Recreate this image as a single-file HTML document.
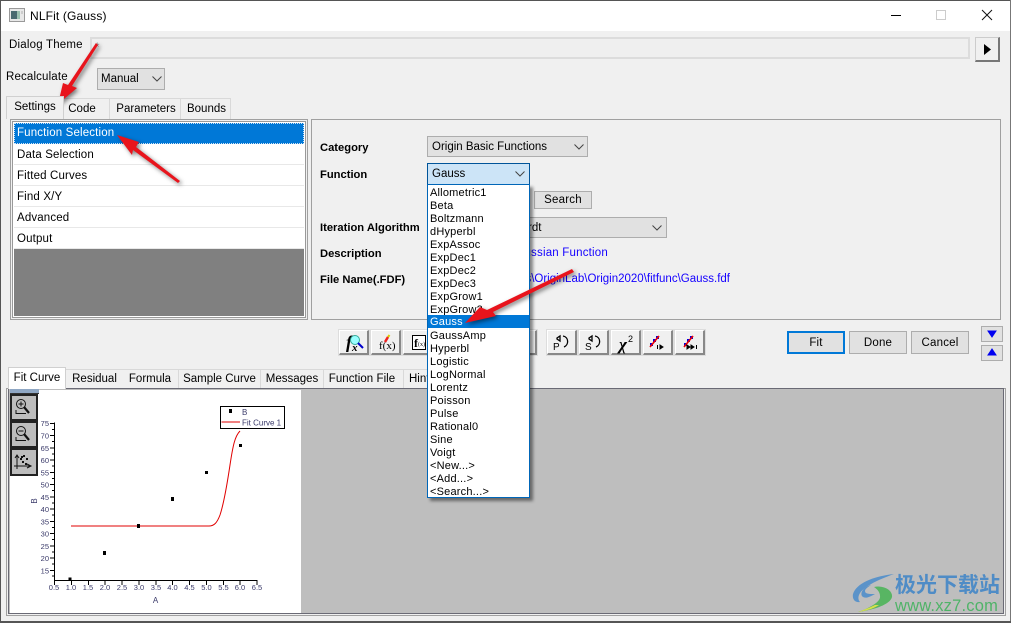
<!DOCTYPE html>
<html><head><meta charset="utf-8"><style>
html,body{margin:0;padding:0}
body{width:1011px;height:623px;overflow:hidden;position:relative;background:#f0f0f0;font:11.5px "Liberation Sans","Noto Sans CJK SC",sans-serif;color:#000}
.a{position:absolute;box-sizing:border-box}
.t{position:absolute;white-space:nowrap;line-height:14px}
.b{font-weight:bold;font-size:11.2px}
.tab{position:absolute;box-sizing:border-box;background:#f0f0f0;border:1px solid #d9d9d9;border-bottom:0;text-align:center;white-space:nowrap;line-height:20px}
.li{position:absolute;left:14px;width:290px;height:21px;background:#fff;border-bottom:1px solid #e8e8e8;padding-left:3px;line-height:22px;box-sizing:border-box;letter-spacing:.15px}
.combo{position:absolute;box-sizing:border-box;background:#e1e1e1;border:1px solid #adadad;padding-left:4px;line-height:21px}
.btn{position:absolute;box-sizing:border-box;background:#e1e1e1;border:1px solid #adadad;text-align:center;line-height:23px;letter-spacing:.2px}
.tb{position:absolute;box-sizing:border-box;top:330px;width:30px;height:25px;background:#f0f0f0;border-top:1px solid #fff;border-left:1px solid #fff;border-right:2px solid #888;border-bottom:2px solid #888;outline:1px solid #ddd}
.dd{position:absolute;left:428px;width:101px;height:13px;line-height:13px;padding-left:2px;box-sizing:border-box;font-size:11px;letter-spacing:.2px}
svg{position:absolute;overflow:visible}
</style></head><body>
<!-- window frame -->
<div class="a" style="left:0;top:0;width:1011px;height:1px;background:#555"></div>
<div class="a" style="left:1px;top:1px;width:1009px;height:30px;background:#fff"></div>
<div class="a" style="left:0;top:0;width:1px;height:623px;background:#555"></div>
<div class="a" style="left:1010px;top:0;width:1px;height:623px;background:#777"></div>
<div class="a" style="left:0;top:621px;width:1011px;height:2px;background:#555"></div>
<!-- title -->
<svg style="left:9px;top:8px" width="16" height="14"><rect x=".5" y=".5" width="15" height="13" fill="#e8e8e8" stroke="#999"/><rect x="2" y="3" width="6" height="8" fill="#4a6a70"/><rect x="8" y="3" width="3" height="8" fill="#9cc0b0"/><rect x="12" y="3" width="2" height="3" fill="#ccc"/></svg>
<div class="t" style="left:30px;top:9px;font-size:12px;letter-spacing:.15px">NLFit (Gauss)</div>
<div class="a" style="left:891px;top:15px;width:10px;height:1px;background:#000"></div>
<div class="a" style="left:936px;top:10px;width:10px;height:10px;border:1px solid #ccc"></div>
<svg style="left:982px;top:10px" width="10" height="10"><path d="M0 0L10 10M10 0L0 10" stroke="#111" stroke-width="1"/></svg>
<!-- theme row -->
<div class="t" style="left:9px;top:38px;letter-spacing:.2px">Dialog Theme</div>
<div class="a" style="left:90px;top:37px;width:880px;height:22px;background:#efefef;border:2px solid #dcdcdc"></div>
<div class="t" style="left:95px;top:41px;color:#888">*</div>
<div class="a" style="left:975px;top:37px;width:25px;height:25px;background:#f0f0f0;border:1px solid #ccc;border-right:2px solid #777;border-bottom:2px solid #777"></div>
<svg style="left:984px;top:44px" width="7" height="11"><path d="M0 0L7 5.5L0 11Z" fill="#000"/></svg>
<div class="t" style="left:6px;top:70px;letter-spacing:.15px">Recalculate</div>
<div class="combo" style="left:97px;top:68px;width:68px;height:22px;line-height:21px;padding-left:3px">Manual</div>
<svg style="left:152px;top:76px" width="10" height="6"><path d="M.5 .5L5 5L9.5 .5" fill="none" stroke="#444"/></svg>
<!-- top tabs -->
<div class="tab" style="left:63px;top:98px;width:47px;height:21px;padding-right:9px;line-height:21px">Code</div>
<div class="tab" style="left:109px;top:98px;width:72px;height:21px;padding-left:2px;line-height:21px">Parameters</div>
<div class="tab" style="left:180px;top:98px;width:51px;height:21px;padding-left:2px;line-height:21px">Bounds</div>
<div class="tab" style="left:6px;top:96px;width:58px;height:23px;background:#f0f0f0;border-color:#d0d0d0;line-height:20px;z-index:2">Settings</div>
<!-- left panel -->
<div class="a" style="left:10px;top:119px;width:298px;height:201px;border:1px solid #a0a0a0"></div>
<div class="a" style="left:12px;top:121px;width:294px;height:197px;border:1px solid #999;background:#fff"></div>
<div class="li" style="top:123px;background:#0078d7;color:#fff;border:1px dotted #cfe3f5;padding-left:2px;line-height:19px">Function Selection</div>
<div class="li" style="top:144px">Data Selection</div>
<div class="li" style="top:165px">Fitted Curves</div>
<div class="li" style="top:186px">Find X/Y</div>
<div class="li" style="top:207px">Advanced</div>
<div class="li" style="top:228px">Output</div>
<div class="a" style="left:14px;top:249px;width:290px;height:67px;background:#808080"></div>
<!-- right panel -->
<div class="a" style="left:311px;top:119px;width:690px;height:201px;border:1px solid #a0a0a0"></div>
<div class="t b" style="left:320px;top:141px">Category</div>
<div class="t b" style="left:320px;top:168px">Function</div>
<div class="t b" style="left:320px;top:221px">Iteration Algorithm</div>
<div class="t b" style="left:320px;top:247px">Description</div>
<div class="t b" style="left:320px;top:273px">File Name(.FDF)</div>
<div class="combo" style="left:427px;top:136px;width:161px;height:21px">Origin Basic Functions</div>
<svg style="left:574px;top:144px" width="10" height="6"><path d="M.5 .5L5 5L9.5 .5" fill="none" stroke="#444"/></svg>
<div class="combo" style="left:427px;top:217px;width:240px;height:21px"></div>
<div class="t" style="left:528px;top:221px">rdt</div>
<svg style="left:652px;top:225px" width="10" height="6"><path d="M.5 .5L5 5L9.5 .5" fill="none" stroke="#444"/></svg>
<div class="btn" style="left:534px;top:191px;width:58px;height:18px;line-height:17px">Search</div>
<div class="t" style="left:440px;top:246px;width:168px;text-align:right;color:#1400ff;letter-spacing:.2px">Gaussian Function</div>
<div class="t" style="right:281px;top:272px;color:#1400ff">C:\Program Files\OriginLab\Origin2020\fitfunc\Gauss.fdf</div>
<!-- toolbar -->
<div class="tb" style="left:339px"></div>
<div class="tb" style="left:371px"></div>
<div class="tb" style="left:403px"></div>
<div class="tb" style="left:507px"></div>
<div class="tb" style="left:547px"></div>
<div class="tb" style="left:579px"></div>
<div class="tb" style="left:611px"></div>
<div class="tb" style="left:643px"></div>
<div class="tb" style="left:675px"></div>
<svg style="left:339px;top:330px" width="370" height="25" font-family="Liberation Serif" fill="#000">
<text x="7" y="18" font-size="18" font-style="italic" font-weight="bold">f</text><text x="13" y="21" font-size="11" font-style="italic" font-weight="bold">x</text>
<circle cx="16" cy="10" r="4.500" fill="#9ff" stroke="#3a9" /><path d="M19 13L24 18" stroke="#00c" stroke-width="2"/>
<text x="40" y="19" font-size="11">f(x)</text><path d="M46 12L49 7" stroke="#e22" stroke-width="2.500"/><path d="M49 7L50.500 5" stroke="#dc0" stroke-width="2"/>
<rect x="73.500" y="5.500" width="13" height="14" fill="#fff" stroke="#000"/><text x="75" y="17" font-size="12" font-weight="bold">f</text><text x="79" y="16" font-size="6">(x)</text>
<path d="M218 8L221 6V11L218 9ZM224 6C230 7 230 15 225 17" fill="none" stroke="#000" stroke-width="1.300"/><text x="214" y="20" font-size="10" font-family="Liberation Sans">P</text>
<path d="M250 8L253 6V11L250 9ZM256 6C262 7 262 15 257 17" fill="none" stroke="#000" stroke-width="1.300"/><text x="246" y="20" font-size="10" font-family="Liberation Sans">S</text>
<text x="280" y="20" font-size="17" font-style="italic" font-weight="bold">χ</text><text x="289" y="12" font-size="9" font-family="Liberation Sans">2</text>
<rect x="311" y="13" width="3" height="3" fill="#00d"/><rect x="314" y="9" width="3" height="3" fill="#00d"/><rect x="317" y="6" width="3" height="3" fill="#00d"/><path d="M311 17L320 6" stroke="#e00" stroke-width="1.600"/><path d="M318.500 15V19M321 15L324 17L321 19Z" fill="#000" stroke="#000"/>
<rect x="345" y="13" width="3" height="3" fill="#00d"/><rect x="348" y="9" width="3" height="3" fill="#00d"/><rect x="351" y="6" width="3" height="3" fill="#00d"/><path d="M345 17L354 6" stroke="#e00" stroke-width="1.600"/><path d="M348 15L351 17L348 19ZM352 15L355 17L352 19ZM357.500 15V19" fill="#000" stroke="#000"/>
</svg>
<!-- fit buttons -->
<div class="btn" style="left:787px;top:331px;width:58px;height:23px;border:2px solid #0078d7;line-height:21px">Fit</div>
<div class="btn" style="left:849px;top:331px;width:58px;height:23px">Done</div>
<div class="btn" style="left:911px;top:331px;width:58px;height:23px">Cancel</div>
<div class="btn" style="left:981px;top:326px;width:22px;height:16px"></div>
<div class="btn" style="left:981px;top:345px;width:22px;height:16px"></div>
<svg style="left:986px;top:331px" width="12" height="7"><path d="M2 0H10L6 6Z" fill="#0000f0" stroke="#0000f0"/></svg>
<svg style="left:986px;top:349px" width="12" height="7"><path d="M2 6H10L6 0Z" fill="#0000f0" stroke="#0000f0"/></svg>
<!-- lower tabs -->
<div class="tab" style="left:66px;top:369px;width:57px;height:19px;border-left:0;border-right:0;line-height:18px">Residual</div>
<div class="tab" style="left:122px;top:369px;width:57px;height:19px;border-left:0;line-height:18px">Formula</div>
<div class="tab" style="left:178px;top:369px;width:83px;height:19px;line-height:18px">Sample Curve</div>
<div class="tab" style="left:260px;top:369px;width:64px;height:19px;line-height:18px">Messages</div>
<div class="tab" style="left:323px;top:369px;width:81px;height:19px;line-height:18px;padding-right:3px;letter-spacing:.05px">Function File</div>
<div class="tab" style="left:403px;top:369px;width:40px;height:19px;line-height:18px;text-align:left;padding-left:5px">Hint</div>
<!-- lower panel -->
<div class="a" style="left:6px;top:388px;width:1000px;height:228px;border:1px solid #a0a0a0"></div>
<div class="a" style="left:8px;top:388px;width:996px;height:226px;border:1px solid #6a6a75;border-top-width:1px;background:#bebebe"></div>
<div class="a" style="left:10px;top:390px;width:291px;height:223px;background:#fff"></div>
<div class="tab" style="left:8px;top:367px;width:58px;height:22px;background:#fff;border-color:#d0d0d0;line-height:20px;z-index:2">Fit Curve</div>
<div class="a" style="left:10px;top:389px;width:29px;height:5px;background:#8fa7c4;border-bottom:1px solid #333"></div>
<!-- zoom tools -->
<div class="a" style="left:10px;top:394px;width:28px;height:27px;background:#bdbdbd;border:2px solid #222;border-right-color:#222"></div>
<div class="a" style="left:10px;top:421px;width:28px;height:27px;background:#bdbdbd;border:2px solid #222"></div>
<div class="a" style="left:10px;top:448px;width:28px;height:28px;background:#bdbdbd;border:2px solid #222"></div>
<svg style="left:10px;top:393px" width="28" height="84" fill="none" stroke="#111">
<circle cx="11" cy="11" r="4.500"/><path d="M14 14L19 20" stroke-width="2.200"/><path d="M8.500 11H13.500M11 8.500V13.500"/><path d="M6 17V20.500H16"/>
<circle cx="11" cy="38" r="4.500"/><path d="M14 41L19 47" stroke-width="2.200"/><path d="M8.500 38H13.500"/><path d="M6 44V47.500H16"/>
<path d="M7 62V76M4 73H21M17 71L21 73L17 75M5 65L7 62L9 65"/><path d="M10 66h2M13 63h2M16 66h3M12 69h2M15 71h2M11 64h2" stroke-width="2" stroke-dasharray="2 1"/>
</svg>
<!-- chart -->
<svg style="left:0;top:0" width="310" height="623" font-family="Liberation Sans" font-size="7.500" fill="#3a3a6a">
<path d="M54.500 422.500V581M54 580.500H257.500" stroke="#000" fill="none"/>
<path d="M54.500 581V585M71.500 581V585M88.500 581V585M105 581V585M122 581V585M139 581V585M156 581V585M172.500 581V585M189.500 581V585M206.500 581V585M223.500 581V585M240 581V585M257 581V585" stroke="#000"/>
<path d="M50 423.500H54M50 435.500H54M50 448H54M50 460H54M50 472.500H54M50 484.500H54M50 497H54M50 509H54M50 521.500H54M50 533.500H54M50 546H54M50 558H54M50 570.500H54" stroke="#000"/>
<path d="M52 429.500H54M52 441.500H54M52 454H54M52 466H54M52 478.500H54M52 490.500H54M52 503H54M52 515H54M52 527.500H54M52 539.500H54M52 552H54M52 564H54M52 576H54" stroke="#000"/>
<g text-anchor="end">
<text x="49" y="426">75</text><text x="49" y="438.500">70</text><text x="49" y="451">65</text><text x="49" y="463">60</text><text x="49" y="475.500">55</text><text x="49" y="487.500">50</text><text x="49" y="500">45</text><text x="49" y="512">40</text><text x="49" y="524.500">35</text><text x="49" y="536.500">30</text><text x="49" y="549">25</text><text x="49" y="561">20</text><text x="49" y="573.500">15</text>
</g>
<g text-anchor="middle">
<text x="54" y="590">0.5</text><text x="71" y="590">1.0</text><text x="88" y="590">1.5</text><text x="105" y="590">2.0</text><text x="122" y="590">2.5</text><text x="139" y="590">3.0</text><text x="156" y="590">3.5</text><text x="172.500" y="590">4.0</text><text x="189.500" y="590">4.5</text><text x="206.500" y="590">5.0</text><text x="223.500" y="590">5.5</text><text x="240" y="590">6.0</text><text x="257" y="590">6.5</text>
<text x="155.500" y="603" font-size="8">A</text>
<text transform="translate(37 501) rotate(-90)" font-size="8">B</text>
</g>
<path d="M71 526H209C214 526 217 523 220 515C224 503 227 485 230 465C233 445 235 436 240 431" fill="none" stroke="#e00000" stroke-width="1"/>
<g fill="#000"><rect x="68.500" y="577.500" width="3" height="3"/><rect x="103" y="551" width="3" height="4"/><rect x="137" y="524" width="3" height="4"/><rect x="171" y="497" width="3" height="4"/><rect x="205" y="471" width="3" height="3"/><rect x="239" y="444" width="3" height="3"/></g>
<rect x="220.500" y="406.500" width="64" height="22" fill="#fff" stroke="#000"/>
<rect x="229" y="409" width="3" height="4" fill="#000"/>
<path d="M221.500 422H240" stroke="#e00000"/>
<text x="242" y="415" font-size="8">B</text><text x="242" y="425.500" font-size="8">Fit Curve 1</text>
</svg>
<!-- dropdown -->
<div class="a" style="left:427px;top:163px;width:103px;height:22px;background:#cce4f7;border:1px solid #005499;padding-left:4px;line-height:21px">Gauss</div>
<svg style="left:515px;top:171px" width="10" height="6"><path d="M.5 .5L5 5L9.5 .5" fill="none" stroke="#444"/></svg>
<div class="a" style="left:427px;top:184px;width:103px;height:314px;background:#fff;border:1px solid #0066b8;box-shadow:3px 3px 3px rgba(0,0,0,.45)"></div>
<div class="dd" style="top:186px;line-height:14px">Allometric1</div>
<div class="dd" style="top:199px;line-height:14px">Beta</div>
<div class="dd" style="top:212px;line-height:14px">Boltzmann</div>
<div class="dd" style="top:225px;line-height:14px">dHyperbl</div>
<div class="dd" style="top:238px;line-height:14px">ExpAssoc</div>
<div class="dd" style="top:251px;line-height:14px">ExpDec1</div>
<div class="dd" style="top:264px;line-height:14px">ExpDec2</div>
<div class="dd" style="top:277px;line-height:14px">ExpDec3</div>
<div class="dd" style="top:290px;line-height:14px">ExpGrow1</div>
<div class="dd" style="top:303px;line-height:14px">ExpGrow2</div>
<div class="dd" style="top:315px;background:#0078d7;color:#fff;line-height:14px">Gauss</div>
<div class="dd" style="top:329px;line-height:14px">GaussAmp</div>
<div class="dd" style="top:342px;line-height:14px">Hyperbl</div>
<div class="dd" style="top:355px;line-height:14px">Logistic</div>
<div class="dd" style="top:368px;line-height:14px">LogNormal</div>
<div class="dd" style="top:381px;line-height:14px">Lorentz</div>
<div class="dd" style="top:394px;line-height:14px">Poisson</div>
<div class="dd" style="top:407px;line-height:14px">Pulse</div>
<div class="dd" style="top:420px;line-height:14px">Rational0</div>
<div class="dd" style="top:433px;line-height:14px">Sine</div>
<div class="dd" style="top:446px;line-height:14px">Voigt</div>
<div class="dd" style="top:459px;line-height:14px">&lt;New...&gt;</div>
<div class="dd" style="top:472px;line-height:14px">&lt;Add...&gt;</div>
<div class="dd" style="top:485px;line-height:14px">&lt;Search...&gt;</div>
<!-- arrows -->
<svg style="left:0;top:0;filter:drop-shadow(2px 2px 2px rgba(0,0,0,.5))" width="1011" height="623">
<path d="M96 43L98 45L72 86L77 88L58 104L63 83L68 85Z" fill="#e8141c"/>
<path d="M117 135L139 142L136 147L180 181L178 183L133 150L132 155Z" fill="#e8141c"/>
<path d="M465 323L480 307L487 310L572 269L574 272L493 312L496 316Z" fill="#e8141c"/>
</svg>
<!-- watermark -->
<svg style="left:851px;top:572px" width="44" height="42">
<path d="M43 2C25 4 6 10 2 22C1 27 4 31 9 30C6 27 7 21 14 16C22 10 32 6 43 2Z" fill="#5b93c9"/>
<path d="M20 13C12 15 8 22 12 25C16 27 20 24 24 22C18 22 14 22 14 19C14 17 17 15 20 13Z" fill="#5b93c9"/>
<path d="M23 15C32 13 42 18 41 25C39 33 22 38 7 40C18 36 30 30 29 24C29 20 26 17 23 15Z" fill="#58b563"/>
<path d="M7 40C12 38 18 36 24 33L28 33C22 37 14 39 7 40Z" fill="#d7e04a"/>
</svg>
<div class="t" style="left:895px;top:572px;font-size:21px;line-height:24px;font-weight:bold;color:#4f8cc6;font-family:'Noto Sans CJK SC',sans-serif">极光下载站</div>
<div class="t" style="left:895px;top:598px;font-size:16.500px;line-height:16px;color:#4fb368;letter-spacing:.2px">www.xz7.com</div>
</body></html>
